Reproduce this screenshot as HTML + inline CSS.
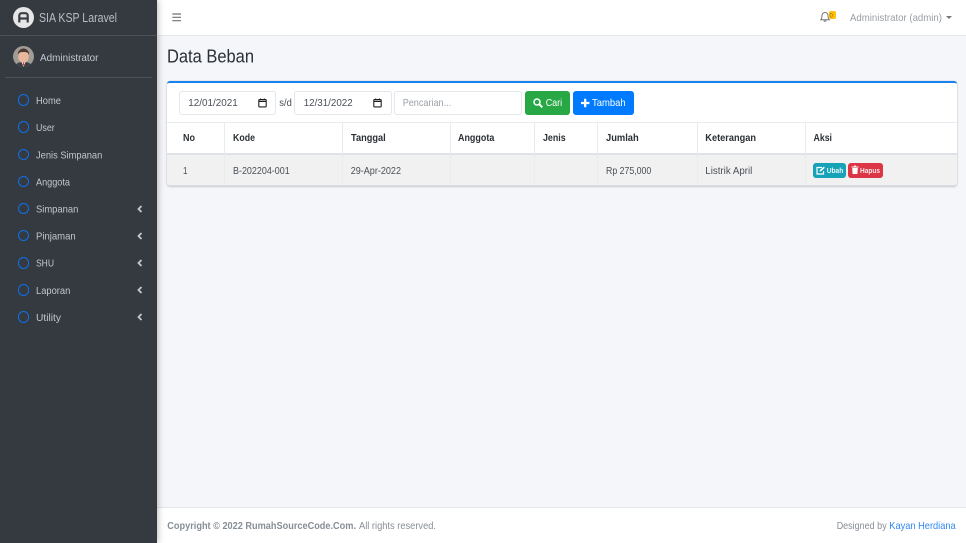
<!DOCTYPE html>
<html lang="id"><head><meta charset="utf-8"><title>Data Beban</title>
<style>
*{box-sizing:border-box}
html,body{margin:0;padding:0}
body{width:966px;height:543px;overflow:hidden;position:relative;background:#f4f6f9;font-family:"Liberation Sans",sans-serif;font-size:10px;color:#212529}
.a{position:absolute}
.side{left:0;top:0;width:157px;height:543px;background:#343a40;box-shadow:0 0 7px rgba(0,0,0,.35)}
.dot{position:absolute;left:17.700px;width:11.700px;height:11.700px;border:1.500px solid #0f6fe8;border-radius:50%}
.chev{position:absolute;left:137px}
.vl{position:absolute;width:1px;background:#e9ebed}
.in{position:absolute;top:91px;height:24px;background:#fff;border:1px solid #e3e6ea;border-radius:3px}
.btn{position:absolute;border-radius:3px}
svg.o{position:absolute;left:0;top:0}
svg.o text{font-family:"Liberation Sans",sans-serif;font-size:10.500px}
.m{fill:#c2c7d0}.h{font-weight:bold;fill:#2b3035}.d{fill:#495057}.g{fill:#868e96}
</style></head><body>

<div class="a" style="left:157px;top:0;width:809px;height:36px;background:#fff;border-bottom:1px solid #e6e8ec"></div>
<svg class="a" style="left:172px;top:13px" width="10" height="10" viewBox="0 0 10 10"><path d="M.3 1h8.700M.3 4.300h8.700M.3 7.700h8.700" stroke="#6c7278" stroke-width="1.200"/></svg>
<svg class="a" style="left:820px;top:10px" width="18" height="14" viewBox="0 0 18 14"><path d="M5 2.500a3 3 0 0 1 3 3c0 2.800.6 3.600 1.300 4.300H.7C1.400 9.100 2 8.300 2 5.500a3 3 0 0 1 3-3zM3.800 10.500a1.300 1.300 0 0 0 2.400 0" fill="none" stroke="#777" stroke-width="1"/><rect x="9" y="1" width="7" height="8" rx="2" fill="#ffc107"/></svg>
<div class="a" style="left:946px;top:16px;width:0;height:0;border:3px solid transparent;border-top:3.500px solid #777;border-bottom:0"></div>

<div class="a" style="left:167px;top:81px;width:790px;height:105px;background:#fff;border-top:2px solid #1a82ee;border-radius:3px;box-shadow:0 0 1px rgba(0,0,0,.25),0 1px 2px rgba(0,0,0,.15)"></div>
<div class="a" style="left:167px;top:122px;width:790px;height:1px;background:#e9ebed"></div>
<div class="a" style="left:167px;top:153px;width:790px;height:33px;background:#f1f1f1;border-top:2px solid #dee2e6;border-bottom:1px solid #dcdfe2;border-radius:0 0 3px 3px"></div>
<div class="vl" style="left:224px;top:123px;height:62px"></div>
<div class="vl" style="left:342px;top:123px;height:62px"></div>
<div class="vl" style="left:450px;top:123px;height:62px"></div>
<div class="vl" style="left:534px;top:123px;height:62px"></div>
<div class="vl" style="left:597px;top:123px;height:62px"></div>
<div class="vl" style="left:697px;top:123px;height:62px"></div>
<div class="vl" style="left:805px;top:123px;height:62px"></div>

<div class="in" style="left:179px;width:97px"></div>
<svg class="a" style="left:258px;top:98px" width="10" height="10" viewBox="0 0 10 10"><rect x=".8" y="1.500" width="7.400" height="7.400" rx=".8" fill="none" stroke="#222" stroke-width="1.100"/><path d="M.8 3.300h7.400" stroke="#222" stroke-width="1.400"/><path d="M2.600.5v1.500M6.400.5v1.500" stroke="#222" stroke-width="1"/></svg>
<div class="in" style="left:294px;width:98px"></div>
<svg class="a" style="left:373px;top:98px" width="10" height="10" viewBox="0 0 10 10"><rect x=".8" y="1.500" width="7.400" height="7.400" rx=".8" fill="none" stroke="#222" stroke-width="1.100"/><path d="M.8 3.300h7.400" stroke="#222" stroke-width="1.400"/><path d="M2.600.5v1.500M6.400.5v1.500" stroke="#222" stroke-width="1"/></svg>
<div class="in" style="left:394px;width:128px"></div>

<div class="btn" style="left:525px;top:91px;width:45px;height:24px;background:#28a745"></div>
<svg class="a" style="left:533px;top:98px" width="10" height="10" viewBox="0 0 10 10"><circle cx="4" cy="4" r="3" fill="none" stroke="#fff" stroke-width="1.500"/><path d="M6.300 6.300l3 3" stroke="#fff" stroke-width="1.900"/></svg>
<div class="btn" style="left:573px;top:91px;width:61px;height:24px;background:#007bff"></div>
<svg class="a" style="left:581px;top:98px" width="9" height="10" viewBox="0 0 9 10"><path d="M4.200 .8v8.400M0 5h8.400" stroke="#fff" stroke-width="2.200"/></svg>

<div class="btn" style="left:813px;top:163px;width:33px;height:15px;background:#17a2b8"></div>
<svg class="a" style="left:816px;top:166px" width="10" height="9" viewBox="0 0 10 9"><path d="M6 1.500H1v6.500h6.500V5" fill="none" stroke="#fff" stroke-width="1.200"/><path d="M3.500 5.500l.3-1.300L7.700.6l1.200 1.100-3.900 3.500z" fill="#fff"/></svg>
<div class="btn" style="left:848px;top:163px;width:35px;height:15px;background:#dc3545"></div>
<svg class="a" style="left:851px;top:165px" width="8" height="10" viewBox="0 0 8 10"><path d="M.5 1.500h7v1h-7zM1.200 3h5.600l-.4 6H1.600zM3 .6h2v1H3z" fill="#fff"/></svg>

<div class="a" style="left:157px;top:507px;width:809px;height:36px;background:#fff;border-top:1px solid #e3e6ea"></div>

<div class="a side">
<div class="a" style="left:0;top:35px;width:157px;height:1px;background:#4b545c"></div>
<svg class="a" style="left:13px;top:6.500px" width="21" height="21" viewBox="0 0 21 21"><circle cx="10.500" cy="10.500" r="10.500" fill="#e6e6e6"/><path d="M6.300 15.500V8.500a2.300 2.300 0 0 1 2.300-2.300h3.800a2.300 2.300 0 0 1 2.300 2.300v7M6.300 11.500h8.400" fill="none" stroke="#3a3f45" stroke-width="2.200"/></svg>
<svg class="a" style="left:13px;top:46px" width="21" height="21" viewBox="0 0 21 21"><defs><clipPath id="c"><circle cx="10.500" cy="10.500" r="10.500"/></clipPath></defs><g clip-path="url(#c)"><rect width="21" height="21" fill="#a09b94"/><path d="M2 21c1-4 4-5 8.500-5s7.500 1 8.500 5z" fill="#3b3f45"/><path d="M8.500 16h4l-2 5z" fill="#f4f4f4"/><ellipse cx="10.500" cy="10.500" rx="5.300" ry="6.300" fill="#e9b89c"/><path d="M5 9c-.5-4.500 3-6.500 5.500-6.500S16.500 4.500 16 9c-1-2.500-2-3-5.500-3S6 6.500 5 9z" fill="#4a3a30"/><path d="M10 16.500h1l.3 3h-1.600z" fill="#c33"/></g></svg>
<div class="a" style="left:5px;top:77px;width:147px;height:1px;background:#4b545c"></div>

<span class="dot" style="top:94.300px"></span>
<span class="dot" style="top:121.400px"></span>
<span class="dot" style="top:148.500px"></span>
<span class="dot" style="top:175.600px"></span>
<span class="dot" style="top:202.700px"></span>
<span class="dot" style="top:229.800px"></span>
<span class="dot" style="top:256.900px"></span>
<span class="dot" style="top:284px"></span>
<span class="dot" style="top:311.100px"></span>
<svg class="chev" style="top:204.500px" width="6" height="8" viewBox="0 0 6 8"><path d="M4.500 1L1.500 4l3 3" fill="none" stroke="#c2c7d0" stroke-width="1.800"/></svg>
<svg class="chev" style="top:231.600px" width="6" height="8" viewBox="0 0 6 8"><path d="M4.500 1L1.500 4l3 3" fill="none" stroke="#c2c7d0" stroke-width="1.800"/></svg>
<svg class="chev" style="top:258.700px" width="6" height="8" viewBox="0 0 6 8"><path d="M4.500 1L1.500 4l3 3" fill="none" stroke="#c2c7d0" stroke-width="1.800"/></svg>
<svg class="chev" style="top:285.800px" width="6" height="8" viewBox="0 0 6 8"><path d="M4.500 1L1.500 4l3 3" fill="none" stroke="#c2c7d0" stroke-width="1.800"/></svg>
<svg class="chev" style="top:312.900px" width="6" height="8" viewBox="0 0 6 8"><path d="M4.500 1L1.500 4l3 3" fill="none" stroke="#c2c7d0" stroke-width="1.800"/></svg>
</div>

<svg class="o" width="966" height="543" viewBox="0 0 966 543">
<text x="39" y="22" style="font-size:12.500px" fill="#b9bdc3" textLength="78" lengthAdjust="spacingAndGlyphs">SIA KSP Laravel</text>
<text x="40" y="61" class="m" textLength="58.500" lengthAdjust="spacingAndGlyphs">Administrator</text>
<text x="36" y="104" class="m" textLength="25" lengthAdjust="spacingAndGlyphs">Home</text>
<text x="36" y="131" class="m" textLength="18.700" lengthAdjust="spacingAndGlyphs">User</text>
<text x="36" y="158.300" class="m" textLength="66.300" lengthAdjust="spacingAndGlyphs">Jenis Simpanan</text>
<text x="36" y="185.400" class="m" textLength="34" lengthAdjust="spacingAndGlyphs">Anggota</text>
<text x="36" y="212.500" class="m" textLength="42.300" lengthAdjust="spacingAndGlyphs">Simpanan</text>
<text x="36" y="239.600" class="m" textLength="39.700" lengthAdjust="spacingAndGlyphs">Pinjaman</text>
<text x="36" y="266.700" class="m" textLength="18" lengthAdjust="spacingAndGlyphs">SHU</text>
<text x="36" y="293.800" class="m" textLength="34.300" lengthAdjust="spacingAndGlyphs">Laporan</text>
<text x="36" y="321" class="m" textLength="25" lengthAdjust="spacingAndGlyphs">Utility</text>

<text x="850" y="21" fill="#9a9ea3" textLength="92" lengthAdjust="spacingAndGlyphs">Administrator (admin)</text>
<text x="829.500" y="17.500" style="font-size:6px" fill="#8a6d00">0</text>
<text x="167" y="62.500" style="font-size:18px" fill="#2b3035" textLength="87" lengthAdjust="spacingAndGlyphs">Data Beban</text>

<text x="188.300" y="106" class="d" textLength="49.500" lengthAdjust="spacingAndGlyphs">12/01/2021</text>
<text x="279.300" y="106" class="d" textLength="12.500" lengthAdjust="spacingAndGlyphs">s/d</text>
<text x="303.700" y="106" class="d" textLength="49" lengthAdjust="spacingAndGlyphs">12/31/2022</text>
<text x="402.700" y="106" fill="#9aa0a6" textLength="48.500" lengthAdjust="spacingAndGlyphs">Pencarian...</text>
<text x="545.700" y="106" fill="#fff" textLength="16.500" lengthAdjust="spacingAndGlyphs">Cari</text>
<text x="592" y="106" fill="#fff" textLength="33.700" lengthAdjust="spacingAndGlyphs">Tambah</text>

<text x="183" y="141" class="h" textLength="12" lengthAdjust="spacingAndGlyphs">No</text>
<text x="233" y="141" class="h" textLength="22" lengthAdjust="spacingAndGlyphs">Kode</text>
<text x="351" y="141" class="h" textLength="34.700" lengthAdjust="spacingAndGlyphs">Tanggal</text>
<text x="458" y="141" class="h" textLength="36.300" lengthAdjust="spacingAndGlyphs">Anggota</text>
<text x="543" y="141" class="h" textLength="22.700" lengthAdjust="spacingAndGlyphs">Jenis</text>
<text x="606" y="141" class="h" textLength="32.700" lengthAdjust="spacingAndGlyphs">Jumlah</text>
<text x="705.300" y="141" class="h" textLength="50.700" lengthAdjust="spacingAndGlyphs">Keterangan</text>
<text x="813.500" y="141" class="h" textLength="18.500" lengthAdjust="spacingAndGlyphs">Aksi</text>

<text x="183" y="174" class="d" textLength="4.500" lengthAdjust="spacingAndGlyphs">1</text>
<text x="233" y="174" class="d" textLength="56.700" lengthAdjust="spacingAndGlyphs">B-202204-001</text>
<text x="350.700" y="174" class="d" textLength="50.300" lengthAdjust="spacingAndGlyphs">29-Apr-2022</text>
<text x="606" y="174" class="d" textLength="45.300" lengthAdjust="spacingAndGlyphs">Rp 275,000</text>
<text x="705.300" y="174" class="d" textLength="47" lengthAdjust="spacingAndGlyphs">Listrik April</text>

<text x="826.700" y="173" style="font-size:7.500px;font-weight:bold" fill="#e6f6f8" textLength="16.600" lengthAdjust="spacingAndGlyphs">Ubah</text>
<text x="860" y="173" style="font-size:7.500px;font-weight:bold" fill="#fbe8ea" textLength="20" lengthAdjust="spacingAndGlyphs">Hapus</text>

<text x="167.300" y="529" class="g" style="font-weight:bold" textLength="188.700" lengthAdjust="spacingAndGlyphs">Copyright © 2022 RumahSourceCode.Com.</text>
<text x="359" y="529" class="g" textLength="77" lengthAdjust="spacingAndGlyphs">All rights reserved.</text>
<text x="836.700" y="529" class="g" textLength="50" lengthAdjust="spacingAndGlyphs">Designed by</text>
<text x="889.300" y="529" fill="#2f88f5" textLength="66.400" lengthAdjust="spacingAndGlyphs">Kayan Herdiana</text>
</svg>
</body></html>
